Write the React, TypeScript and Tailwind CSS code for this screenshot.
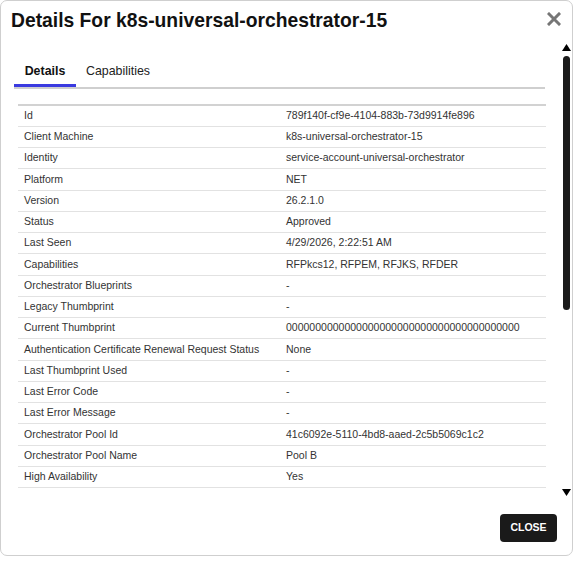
const ROWS: [string, string][] = [
  ["Id", "789f140f-cf9e-4104-883b-73d9914fe896"],
  ["Client Machine", "k8s-universal-orchestrator-15"],
  ["Identity", "service-account-universal-orchestrator"],
  ["Platform", "NET"],
  ["Version", "26.2.1.0"],
  ["Status", "Approved"],
  ["Last Seen", "4/29/2026, 2:22:51 AM"],
  ["Capabilities", "RFPkcs12, RFPEM, RFJKS, RFDER"],
  ["Orchestrator Blueprints", "-"],
  ["Legacy Thumbprint", "-"],
  ["Current Thumbprint", "0000000000000000000000000000000000000000"],
  ["Authentication Certificate Renewal Request Status", "None"],
  ["Last Thumbprint Used", "-"],
  ["Last Error Code", "-"],
  ["Last Error Message", "-"],
  ["Orchestrator Pool Id", "41c6092e-5110-4bd8-aaed-2c5b5069c1c2"],
  ["Orchestrator Pool Name", "Pool B"],
  ["High Availability", "Yes"],
];

function Scrollbar() {
  return (
    <div className="w-[12px] h-[455px] flex flex-col items-center">
      <svg width="9" height="7" viewBox="0 0 9 7" className="block mt-[2px] shrink-0">
        <path d="M4.5 0 L9 7 L0 7 Z" fill="#000" />
      </svg>
      <div className="mt-[5px] w-[7px] h-[254px] shrink-0 rounded-full bg-[#1b1b1b]" />
      <div className="flex-1" />
      <svg width="9" height="7" viewBox="0 0 9 7" className="block mb-[1px] shrink-0">
        <path d="M0 0 L9 0 L4.5 7 Z" fill="#000" />
      </svg>
    </div>
  );
}

export default function App() {
  return (
    <div className="w-[574px] h-[561px] bg-white font-['Liberation_Sans',Arial,sans-serif] text-[#222]">
      <div className="w-[573px] h-[556px] border border-[#cfcfcf] rounded-[7px] flex flex-col overflow-hidden">
        <div className="h-[41px] shrink-0 flex items-start justify-between pl-[10px] pr-[11px] pt-[8px]">
          <h2 className="text-[19.3px] font-bold leading-[24px] text-[#111]">
            Details For k8s-universal-orchestrator-15
          </h2>
          <svg width="14" height="14" viewBox="0 0 14 14" className="mt-[3px]">
            <path d="M2 2 L12 12 M12 2 L2 12" stroke="#767676" strokeWidth="3" strokeLinecap="square" />
          </svg>
        </div>

        <div className="h-[455px] shrink-0 flex">
          <div className="flex-1 overflow-hidden pl-[13px] pr-[15px]">
            <div className="flex mt-[19px] border-b-2 border-[#cfcfcf]">
              <div className="w-[62px] h-[26px] pt-[1px] text-center text-[12.4px] font-bold text-[#111] border-b-[3px] border-[#3a3ae0] -mb-[2px]">
                Details
              </div>
              <div className="w-[84px] h-[26px] pt-[1px] text-center text-[12.4px] text-[#222]">
                Capabilities
              </div>
            </div>

            <table className="mt-[15px] ml-[4px] w-[528px] border-t-2 border-[#d2d2d2] text-[10.5px] text-[#333]">
              <tbody>
                {ROWS.map(([k, v]) => (
                  <tr key={k} className="h-[21.25px] border-b border-[#e2e2e2]">
                    <td className="pl-[6px] w-[262px]">{k}</td>
                    <td className="pl-[6px]">{v}</td>
                  </tr>
                ))}
              </tbody>
            </table>
          </div>
          <Scrollbar />
        </div>

        <div className="flex-1 flex items-start justify-end pr-[15px] pt-[17px]">
          <button className="h-[28px] w-[57px] rounded-[4px] bg-[#1a1a1a] text-white text-[10.5px] font-bold">
            CLOSE
          </button>
        </div>
      </div>
    </div>
  );
}
